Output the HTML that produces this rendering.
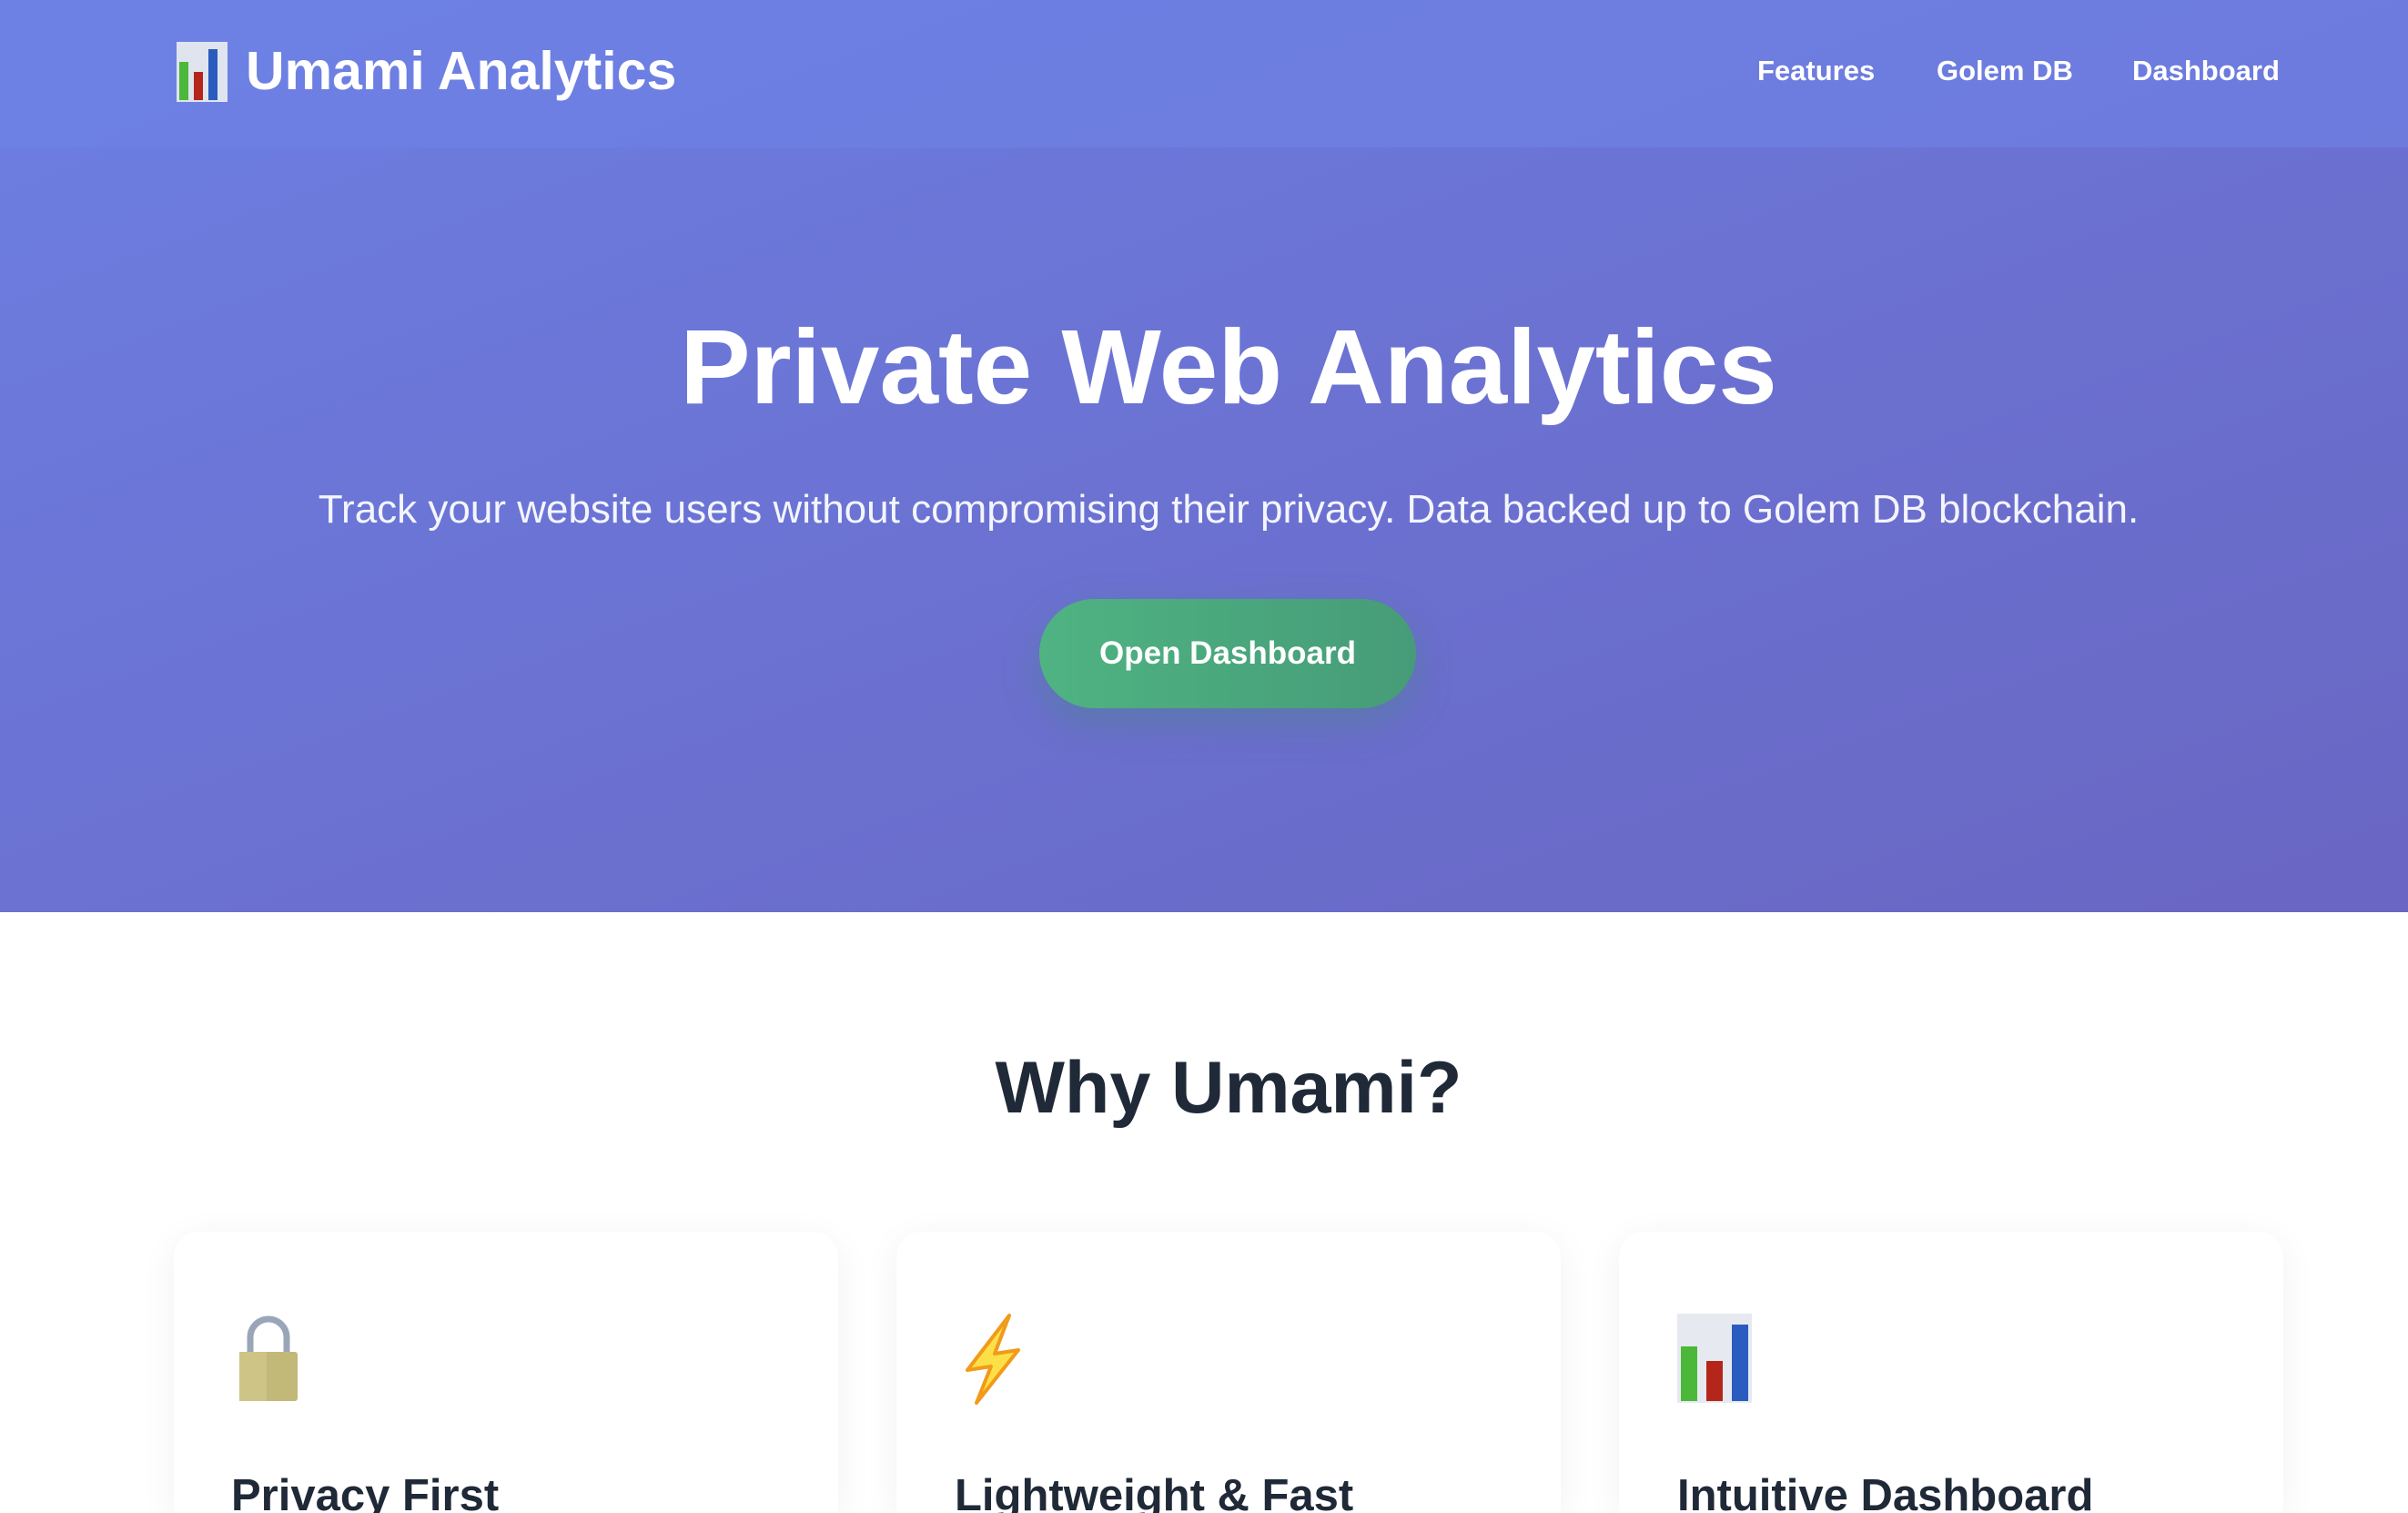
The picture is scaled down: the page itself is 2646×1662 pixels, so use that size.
<!DOCTYPE html>
<html><head><meta charset="utf-8"><style>
*{margin:0;padding:0;box-sizing:border-box}
html,body{width:2646px;height:1662px;overflow:hidden}
body{font-family:"Liberation Sans",sans-serif;background:#fff;position:relative}
.hero{position:absolute;left:0;top:0;width:2646px;height:1002px;background:linear-gradient(160deg,#6c7fe2 0%,#6b72d2 50%,#6a66c3 100%)}
.nav{position:absolute;left:0;top:0;width:2646px;height:162px;background:rgba(110,130,230,0.6)}
.logo{position:absolute;left:270px;top:43px;color:#fff;font-weight:bold;font-size:59px;line-height:70px}
.links{position:absolute;top:60px;font-size:31px;color:#fff;font-weight:bold}
.c{position:absolute;left:0;width:2700px;text-align:center}
h1{top:338px;color:#fff;font-size:116px;line-height:130px;font-weight:bold}
.sub{top:533px;color:#f4f5ff;font-size:44px;line-height:54px}
.btn{position:absolute;left:1142px;top:658px;width:414px;height:120px;border-radius:60px;background:linear-gradient(90deg,#4fb382,#469c78);color:#fff;font-weight:bold;font-size:35px;line-height:120px;text-align:center;box-shadow:0 16px 40px rgba(60,140,110,0.35)}
h2{top:1145px;color:#1f2937;font-size:81px;line-height:100px;font-weight:bold}
.card{position:absolute;top:1353px;width:730px;height:309px;background:#fff;border-radius:28px 28px 0 0;box-shadow:0 8px 40px rgba(0,0,0,0.06)}
.card svg{position:absolute;left:64px;top:90px}
.t{position:absolute;top:1613px;font-size:49px;color:#1f2937;font-weight:bold;line-height:60px;height:49px;overflow:hidden}
</style></head><body>
<div class="hero"></div>
<div class="nav"></div>
<svg style="position:absolute;left:194px;top:46px" width="56" height="66" viewBox="0 0 56 66"><rect x="0" y="0" width="56" height="66" fill="#dfe4ee"/><rect x="3" y="22" width="10" height="42" fill="#4cb83a"/><rect x="19" y="33" width="10" height="31" fill="#b5261a"/><rect x="35" y="8" width="10" height="56" fill="#2a5cc0"/></svg>
<div class="logo">Umami Analytics</div>
<div class="links" style="left:1931px">Features</div>
<div class="links" style="left:2128px">Golem DB</div>
<div class="links" style="left:2343px">Dashboard</div>
<h1 class="c">Private Web Analytics</h1>
<div class="sub c">Track your website users without compromising their privacy. Data backed up to Golem DB blockchain.</div>
<div class="btn">Open Dashboard</div>
<h2 class="c">Why Umami?</h2>
<div class="card" style="left:191px"><svg width="80" height="100" viewBox="0 0 80 100"><path d="M20 44 V26 a20 20 0 0 1 40 0 V44" fill="none" stroke="#9aa6b8" stroke-width="7"/><rect x="8" y="42" width="64" height="54" rx="3" fill="#c2b877"/><rect x="8" y="42" width="30" height="54" fill="#cdc486"/></svg></div>
<div class="card" style="left:985px"><svg width="80" height="100" viewBox="0 0 80 100"><path d="M60 2 L14 62 L40 58 L24 98 L70 40 L44 44 Z" fill="#fde047" stroke="#f29a1a" stroke-width="4" stroke-linejoin="round"/></svg></div>
<div class="card" style="left:1779px"><svg width="82" height="98" viewBox="0 0 82 98"><rect width="82" height="98" fill="#e6eaf0"/><rect x="4" y="36" width="18" height="60" fill="#4cb83a"/><rect x="32" y="52" width="18" height="44" fill="#b5261a"/><rect x="60" y="12" width="18" height="84" fill="#2a5cc0"/></svg></div>
<div class="t" style="left:254px">Privacy First</div>
<div class="t" style="left:1049px">Lightweight &amp; Fast</div>
<div class="t" style="left:1843px">Intuitive Dashboard</div>
</body></html>
